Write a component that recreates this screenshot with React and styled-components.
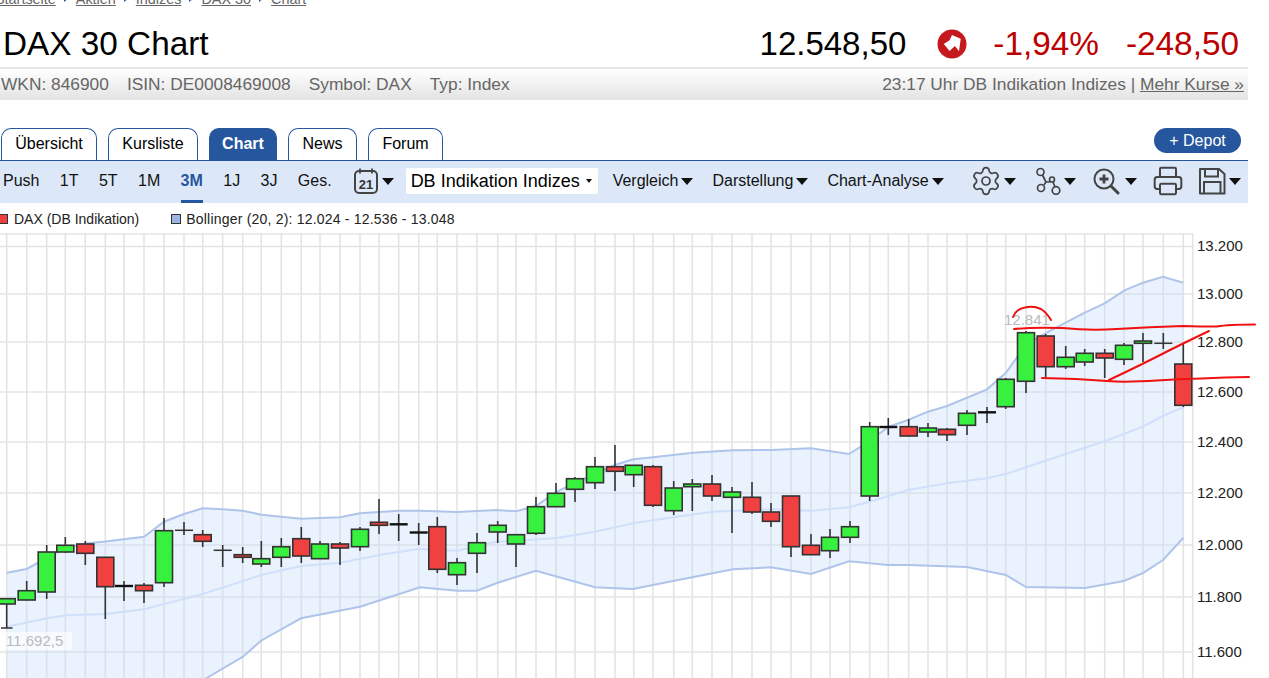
import React from "react";
import styled, { createGlobalStyle } from "styled-components";
import { Settings, Printer } from "lucide-react";

const BLUE = "#26569d";

const GlobalStyle = createGlobalStyle`
  html, body {
    margin: 0;
    height: 678px;
    overflow: hidden;
    background: #fff;
    font-family: "Liberation Sans", Arial, sans-serif;
  }
`;

const Page = styled.div`
  width: 1248px;
`;

const Breadcrumb = styled.nav`
  display: flex;
  align-items: center;
  gap: 8px;
  height: 16px;
  margin: -9px 0 0 -5px;
  font-size: 14.4px;
  color: #666;
`;

const Crumb = styled.span`
  text-decoration: underline;
`;

const CrumbArrow = styled.i`
  width: 0;
  height: 0;
  border-left: 4px solid #3b5f95;
  border-top: 3px solid transparent;
  border-bottom: 3px solid transparent;
`;

const TitleRow = styled.div`
  display: flex;
  align-items: center;
  box-sizing: border-box;
  height: 60px;
  padding: 14px 9px 0 3px;
  font-size: 33.33px;
  color: #000;
`;

const Title = styled.h1`
  margin: 0 auto 0 0;
  font-size: 33.33px;
  font-weight: 400;
`;

const Price = styled.span`
  font-size: 33px;
`;

const Change = styled.span`
  margin-left: 27px;
  color: #bb0000;
`;

const StatusIcon = styled.svg`
  width: 30px;
  height: 30px;
  margin: 0 -1px 0 31px;
`;

const InfoBar = styled.div`
  display: flex;
  align-items: center;
  height: 31px;
  padding: 0 4px 0 1px;
  border-top: 2px solid #e6e6e6;
  background: linear-gradient(#fff, #e3e3e3);
  font-size: 17.33px;
  color: #666;
`;

const InfoItem = styled.span`
  margin-right: 18px;
`;

const Source = styled.span`
  margin-left: auto;
`;

const MoreLink = styled.span`
  text-decoration: underline;
`;

const TabRow = styled.div`
  display: flex;
  align-items: flex-end;
  gap: 11px;
  height: 32px;
  margin-top: 28px;
  padding: 0 7px 0 1px;
`;

const Tab = styled.div`
  display: flex;
  align-items: center;
  justify-content: center;
  box-sizing: border-box;
  height: 32px;
  width: ${(p) => p.$w}px;
  padding-bottom: 2px;
  border: 1px solid ${BLUE};
  border-bottom: 0;
  border-radius: 10px 10px 0 0;
  font-size: 16px;
  font-weight: ${(p) => (p.$active ? 700 : 400)};
  color: ${(p) => (p.$active ? "#fff" : "#000")};
  background: ${(p) => (p.$active ? BLUE : "#fff")};
`;

const DepotButton = styled.div`
  display: flex;
  align-items: center;
  justify-content: center;
  align-self: flex-start;
  width: 87px;
  height: 25px;
  margin-left: auto;
  border-radius: 13px;
  background: ${BLUE};
  color: #fff;
  font-size: 16px;
`;

const Toolbar = styled.div`
  display: flex;
  align-items: center;
  box-sizing: border-box;
  height: 43px;
  padding: 1px 0 3px 3px;
  border-top: 1px solid ${BLUE};
  background: #dce8f8;
  font-size: 16px;
  color: #111;
  white-space: nowrap;
`;

const RangeGroup = styled.div`
  display: flex;
  flex: none;
  align-self: stretch;
  gap: 20.4px;
  margin-bottom: -3px;
`;

const RangeItem = styled.div`
  display: flex;
  align-items: center;
  border-bottom: 3px solid ${(p) => (p.$active ? BLUE : "transparent")};
  font-weight: ${(p) => (p.$active ? 700 : 400)};
  color: ${(p) => (p.$active ? BLUE : "#111")};
`;

const Caret = styled.i`
  flex: none;
  width: 0;
  height: 0;
  margin-left: ${(p) => p.$gap ?? 3}px;
  border-left: 6px solid transparent;
  border-right: 6px solid transparent;
  border-top: 7px solid #111;
`;

const IconGroup = styled.div`
  display: flex;
  flex: none;
  align-items: center;
  margin-left: ${(p) => p.$left}px;
`;

const SelectBox = styled.div`
  display: flex;
  flex: none;
  align-items: center;
  box-sizing: border-box;
  width: 192px;
  height: 26px;
  margin-left: 12px;
  padding: 0 6px 0 5px;
  border-radius: 2px;
  background: #fff;
  font-size: 18px;
  color: #000;
`;

const SelectCaret = styled.i`
  width: 0;
  height: 0;
  margin-left: auto;
  border-left: 3.5px solid transparent;
  border-right: 3.5px solid transparent;
  border-top: 4px solid #111;
`;

const MenuItem = styled.div`
  display: flex;
  flex: none;
  align-items: center;
  margin-left: ${(p) => p.$left}px;
`;

const Legend = styled.div`
  display: flex;
  align-items: center;
  box-sizing: border-box;
  height: 30px;
  padding-top: 2px;
  font-size: 14px;
  color: #222;
`;

const Swatch = styled.i`
  box-sizing: border-box;
  width: 10px;
  height: 10px;
  margin: ${(p) => p.$margin};
  border: 1px solid #333;
  background: ${(p) => p.$color};
`;

const LegendValues = styled.span`
  letter-spacing: 0.2px;
`;

const ChartSvg = styled.svg`
  display: block;
  width: 1269px;
  height: 445px;
  font-family: "Liberation Sans", Arial, sans-serif;
`;

const GREEN_FILL = "#38f03e";
const RED_FILL = "#f04040";
const INK = "#333";

// [x, wickTop, wickBottom, bodyTop, bodyBottom, "g" | "r" | "d" thin doji | "D" thick doji]
const candles = [
  [6.7, 598, 628, 598.7, 604, "g"],
  [26.7, 581, 600, 590.7, 600, "g"],
  [46.7, 545, 599, 552, 592, "g"],
  [65.3, 537, 553, 545.3, 552, "g"],
  [85.3, 541, 565, 544, 553.3, "r"],
  [105.3, 557, 619, 557.3, 586.7, "r"],
  [124, 581, 601, 586, 586, "D"],
  [144, 583, 603, 585.3, 590.7, "r"],
  [164, 518, 587, 530.7, 582.7, "g"],
  [184, 522, 535, 530.3, 530.3, "d"],
  [202.7, 530, 547, 534.7, 541.3, "r"],
  [222.7, 545, 567, 550.3, 550.3, "d"],
  [242.7, 547, 563, 554.7, 557.3, "r"],
  [261.3, 541, 567, 558.7, 564, "g"],
  [281.3, 538, 567, 546.7, 557.3, "g"],
  [301.3, 527, 563, 538.7, 556, "r"],
  [320, 541, 559, 544, 558.7, "g"],
  [340, 542, 565, 544, 548, "r"],
  [360, 527, 551, 529.3, 546.7, "g"],
  [379, 499, 534, 522.3, 525.3, "r"],
  [398.7, 514, 541, 524.3, 524.3, "D"],
  [418.7, 523, 545, 532.5, 532.5, "D"],
  [437.3, 517, 573, 526.7, 569.3, "r"],
  [457, 558, 585, 562.7, 574.7, "g"],
  [477, 533, 573, 542.7, 553.3, "g"],
  [497.7, 521, 543, 525.3, 532, "g"],
  [516, 535, 567, 534.7, 544, "g"],
  [536, 497, 535, 506.7, 533.3, "g"],
  [556, 483, 507, 493.3, 506.7, "g"],
  [575, 477, 502, 478.7, 489.3, "g"],
  [595, 457, 489, 466.7, 482.7, "g"],
  [615, 445, 491, 466.7, 471.3, "r"],
  [633.7, 465, 487, 465.3, 474.7, "g"],
  [653, 465, 507, 466.7, 505.3, "r"],
  [673.7, 481, 515, 488, 510.7, "g"],
  [692.3, 479, 511, 484, 486.7, "g"],
  [712, 475, 501, 484, 496, "r"],
  [732, 487, 533, 492, 497.3, "g"],
  [752, 482, 514, 497.3, 512, "r"],
  [771, 503, 527, 512, 521.3, "r"],
  [791, 496, 557, 496, 546.7, "r"],
  [811, 534, 555, 545.3, 554.7, "r"],
  [830, 529, 558, 537.3, 550.7, "g"],
  [850, 521, 543, 526.7, 537.3, "g"],
  [869.7, 422, 501, 426.7, 496, "g"],
  [888.3, 418, 435, 427, 427, "D"],
  [908.7, 419, 436, 426.7, 436, "r"],
  [928, 423, 437, 428, 432, "g"],
  [947, 428, 441, 429.3, 434.7, "r"],
  [967, 410, 435, 413.3, 425.3, "g"],
  [987, 407, 423, 412.3, 412.3, "D"],
  [1005.7, 378, 409, 379.3, 406.7, "g"],
  [1026, 331, 393, 332.7, 381.3, "g"],
  [1045.7, 334, 377, 336, 366.7, "r"],
  [1065.7, 346, 369, 357.3, 366.7, "g"],
  [1084.7, 349, 366, 353.3, 362, "g"],
  [1104.7, 349, 378, 353.3, 358, "r"],
  [1124, 343, 365, 345.3, 359.3, "g"],
  [1143, 333, 362, 341, 343.3, "g"],
  [1163.3, 333, 349, 343.3, 343.3, "d"],
  [1183.3, 344, 407, 364, 405.3, "r"],
];

const upperBand = [
  [6.7, 572.7], [26.7, 569], [46.7, 558], [65.3, 548], [85.3, 543.5], [105.3, 541.5], [144, 536.7],
  [164, 521.7], [184, 514], [202.7, 508.3], [222.7, 509.3], [242.7, 510.7], [261.3, 514.7], [301.3, 518.7],
  [340, 517.3], [360, 513.3], [398.7, 510.7], [420, 510.7], [457, 512], [497, 510], [516, 511.3], [536, 506],
  [556, 492], [575, 483], [595, 474], [615, 465], [633, 459.3], [653, 457.3], [673, 455], [693, 452.7],
  [733, 450.3], [771, 450], [811, 448.3], [849, 454], [869.7, 441], [888, 427], [908, 420], [928, 411.7],
  [947, 406], [987, 389.3], [1005.7, 373], [1026, 345], [1045.7, 333], [1065.7, 322.7], [1084.7, 312.7],
  [1104.7, 303.3], [1124, 290.7], [1143, 282.7], [1163, 276.7], [1183.3, 282.7],
];

const lowerBand = [
  [6.7, 790], [206.7, 678], [243, 656.7], [261, 640.7], [301, 618.3], [360, 606.7], [420, 587.3], [457, 590.7],
  [477, 590.7], [497, 583], [536, 570.7], [595, 587.3], [633, 589], [673, 581], [733, 569.3], [771, 567.3],
  [811, 574], [849, 561.3], [888, 565], [908, 565], [967, 567], [1005.7, 575], [1026, 587], [1085, 588],
  [1124, 581], [1143, 573], [1163, 560], [1183.3, 538],
];

const middleBand = [
  [6.7, 626.7], [46.7, 618.3], [66.7, 615.3], [105.3, 614], [144, 609.3], [202.7, 594], [261.3, 575],
  [301.3, 566], [340, 562.7], [379, 555], [418.7, 549], [457, 550.7], [497, 541.7], [516, 540.7], [557, 538],
  [595, 531.7], [633, 523.3], [673, 517.3], [713, 511.7], [771, 509.3], [811, 510.7], [849, 507.3], [869.7, 501.7],
  [908, 490], [947, 483.3], [987, 478.3], [1005.7, 474], [1026, 467.3], [1065.7, 454], [1104.7, 441.3],
  [1143, 426.7], [1163, 416], [1183.3, 407.3],
];

const axisLabels = [
  ["13.200", 246.5], ["13.000", 294], ["12.800", 342], ["12.600", 392], ["12.400", 442],
  ["12.200", 493], ["12.000", 545], ["11.800", 597], ["11.600", 652],
];

const toPoints = (pts) => pts.map((p) => p.join(",")).join(" ");

const bandFill = toPoints([...upperBand, ...[...lowerBand].reverse()]);

// hand drawn marks on top of the chart, in px
const scribbles = [
  "M1013 317 Q1016 309 1025 307.5 Q1033 305.5 1041 309 Q1047 313 1051 320",
  "M1014 329 Q1033 327 1063 328 Q1090 331 1117 329 Q1150 327 1183 326 Q1200 326.5 1217 326.5 Q1228 324.5 1255 324.5",
  "M1042 378 Q1077 378.5 1107 381 Q1125 382.5 1157 380.5 Q1200 378 1249 377",
  "M1109 380 Q1145 363 1170 350 Q1190 340 1209 331",
];

const Candle = ({ c }) => {
  const [x, top, bottom, bodyTop, bodyBottom, kind] = c;
  if (kind === "d" || kind === "D") {
    return (
      <g stroke={INK} strokeWidth="1.6">
        <line x1={x} x2={x} y1={top} y2={bottom} />
        <line x1={x - 9} x2={x + 9} y1={bodyTop} y2={bodyTop} stroke={kind === "D" ? "#111" : INK} strokeWidth={kind === "D" ? 2.4 : 1.5} />
      </g>
    );
  }
  return (
    <g stroke={INK} strokeWidth="1.6">
      <line x1={x} x2={x} y1={top} y2={bottom} />
      <rect x={x - 8.5} y={bodyTop} width="17" height={bodyBottom - bodyTop} fill={kind === "g" ? GREEN_FILL : RED_FILL} />
    </g>
  );
};

const Chart = () => (
  <ChartSvg viewBox="0 233 1269 445">
    <g stroke="#e4e4e4" strokeWidth="1.6">
      {candles.map((c) => (
        <line key={c[0]} x1={c[0]} x2={c[0]} y1="233" y2="678" />
      ))}
      <line x1="1192.7" x2="1192.7" y1="233" y2="678" />
      <line x1="0" x2="1193" y1="234" y2="234" />
      {axisLabels.map(([label, y]) => (
        <line key={label} x1="0" x2="1193" y1={y} y2={y} />
      ))}
    </g>
    <polygon points={bandFill} fill="#c2d8fb" opacity="0.34" />
    <polyline points={toPoints(middleBand)} fill="none" stroke="#cfe0fb" strokeWidth="2" />
    <polyline points={toPoints(upperBand)} fill="none" stroke="#afc4ea" strokeWidth="2" />
    <polyline points={toPoints(lowerBand)} fill="none" stroke="#afc4ea" strokeWidth="2" />
    {candles.map((c) => (
      <Candle key={c[0]} c={c} />
    ))}
    <line x1="1" x2="12.5" y1="628" y2="628" stroke={INK} strokeWidth="1.5" />
    <rect x="4" y="632" width="68" height="18" fill="#fff" opacity="0.6" />
    <text x="6" y="646" fontSize="15" fill="#bbb">11.692,5</text>
    <text x="1004" y="325" fontSize="15" fill="#bbb">12.841</text>
    <g fill="none" stroke="#f01010" strokeWidth="2" strokeLinecap="round">
      {scribbles.map((d) => (
        <path key={d} d={d} />
      ))}
    </g>
    {axisLabels.map(([label, y]) => (
      <text key={label} x="1197" y={y + 4.5} fontSize="15" fill="#222">{label}</text>
    ))}
  </ChartSvg>
);

const CalendarIcon = () => (
  <svg width="26" height="28" viewBox="0 0 26 28">
    <rect x="2" y="4" width="22" height="22" rx="4" fill="none" stroke="#444" strokeWidth="2" />
    <path d="M7 1.5v5M19 1.5v5M8 4h10" fill="none" stroke="#444" strokeWidth="1.8" />
    <text x="13" y="22" fontSize="13" fontWeight="700" textAnchor="middle" fill="#333" fontFamily="Liberation Sans, sans-serif">21</text>
  </svg>
);

const NetworkIcon = () => (
  <svg width="26" height="28" viewBox="0 0 26 28" fill="none" stroke="#444" strokeWidth="1.7">
    <circle cx="5.5" cy="5" r="3.5" />
    <circle cx="17" cy="12.5" r="2.5" />
    <circle cx="6" cy="21" r="3.5" />
    <circle cx="21" cy="23.5" r="3.8" />
    <path d="M7.5 8 L11 15 L9 18 M11 15 H15 M18 15 L20 20" />
  </svg>
);

const ZoomIcon = () => (
  <svg width="28" height="28" viewBox="0 0 28 28" fill="none" stroke="#444" strokeWidth="2">
    <circle cx="11" cy="12" r="9.5" />
    <path d="M11 7.5v9M6.5 12h9" strokeWidth="2.8" />
    <path d="M18 19l7 7" strokeWidth="3" strokeLinecap="round" />
  </svg>
);

const SaveIcon = () => (
  <svg width="28" height="28" viewBox="0 0 28 28" fill="none" stroke="#444" strokeWidth="2">
    <path d="M2 2 H21 L26.5 7 V26.5 H2 Z" strokeLinejoin="round" />
    <path d="M7 2 V9.5 H20 V2 M6 26 V15 H22.5 V26" />
  </svg>
);

const rangeItems = ["Push", "1T", "5T", "1M", "3M", "1J", "3J", "Ges."];
const tabs = [
  ["Übersicht", 96],
  ["Kursliste", 90],
  ["Chart", 68],
  ["News", 69],
  ["Forum", 75],
];

const App = () => (
  <>
    <GlobalStyle />
    <Page>
      <Breadcrumb>
        <Crumb>Startseite</Crumb>
        <CrumbArrow />
        <Crumb>Aktien</Crumb>
        <CrumbArrow />
        <Crumb>Indizes</Crumb>
        <CrumbArrow />
        <Crumb>DAX 30</Crumb>
        <CrumbArrow />
        <Crumb>Chart</Crumb>
      </Breadcrumb>
      <TitleRow>
        <Title>DAX 30 Chart</Title>
        <Price>12.548,50</Price>
        <StatusIcon viewBox="0 0 124 124">
          <circle cx="62" cy="62" r="60" fill="#c4191d" />
          <polygon points="62,25 98,40 91,92 74,70 52,91 28,62 52,47" fill="#fff" />
        </StatusIcon>
        <Change>-1,94%</Change>
        <Change>-248,50</Change>
      </TitleRow>
      <InfoBar>
        <InfoItem>WKN: 846900</InfoItem>
        <InfoItem>ISIN: DE0008469008</InfoItem>
        <InfoItem>Symbol: DAX</InfoItem>
        <InfoItem>Typ: Index</InfoItem>
        <Source>
          23:17 Uhr DB Indikation Indizes | <MoreLink>Mehr Kurse »</MoreLink>
        </Source>
      </InfoBar>
      <TabRow>
        {tabs.map(([label, w]) => (
          <Tab key={label} $w={w} $active={label === "Chart"}>
            {label}
          </Tab>
        ))}
        <DepotButton>+ Depot</DepotButton>
      </TabRow>
      <Toolbar>
        <RangeGroup>
          {rangeItems.map((item) => (
            <RangeItem key={item} $active={item === "3M"}>
              {item}
            </RangeItem>
          ))}
        </RangeGroup>
        <IconGroup $left={21}>
          <CalendarIcon />
          <Caret />
        </IconGroup>
        <SelectBox>
          DB Indikation Indizes
          <SelectCaret />
        </SelectBox>
        <MenuItem $left={15}>
          Vergleich
          <Caret />
        </MenuItem>
        <MenuItem $left={19}>
          Darstellung
          <Caret />
        </MenuItem>
        <MenuItem $left={19}>
          Chart-Analyse
          <Caret />
        </MenuItem>
        <IconGroup $left={26.5}>
          <Settings size={32} strokeWidth={1.3} color="#444" />
          <Caret $gap={2} />
        </IconGroup>
        <IconGroup $left={18.5}>
          <NetworkIcon />
          <Caret $gap={3} />
        </IconGroup>
        <IconGroup $left={17.5}>
          <ZoomIcon />
          <Caret $gap={4} />
        </IconGroup>
        <IconGroup $left={15}>
          <Printer size={32} strokeWidth={1.5} color="#444" />
        </IconGroup>
        <IconGroup $left={14}>
          <SaveIcon />
          <Caret $gap={3} />
        </IconGroup>
      </Toolbar>
      <Legend>
        <Swatch $color={RED_FILL} $margin="0 6px 0 -2px" />
        DAX (DB Indikation)
        <Swatch $color="#9db4e0" $margin="0 5px 0 32px" />
        <LegendValues>Bollinger (20, 2): 12.024 - 12.536 - 13.048</LegendValues>
      </Legend>
      <Chart />
    </Page>
  </>
);

export default App;
